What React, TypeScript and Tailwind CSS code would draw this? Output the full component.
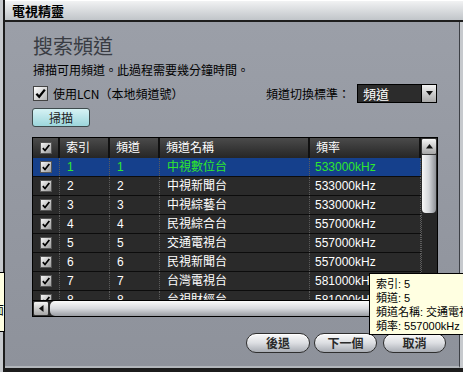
import React from "react";

const channels = [
  { idx: "1", ch: "1", name: "中視數位台", freq: "533000kHz" },
  { idx: "2", ch: "2", name: "中視新聞台", freq: "533000kHz" },
  { idx: "3", ch: "3", name: "中視綜藝台", freq: "533000kHz" },
  { idx: "4", ch: "4", name: "民視綜合台", freq: "557000kHz" },
  { idx: "5", ch: "5", name: "交通電視台", freq: "557000kHz" },
  { idx: "6", ch: "6", name: "民視新聞台", freq: "557000kHz" },
  { idx: "7", ch: "7", name: "台灣電視台", freq: "581000kHz" },
  { idx: "8", ch: "8", name: "台視財經台", freq: "581000kHz" }
];

function CheckMark({ size }: { size: number }) {
  return (
    <svg width={size} height={size} viewBox="0 0 12 12">
      <polyline points="2.2,6.2 4.8,9 10,2.4" fill="none" stroke="#000" strokeWidth="2.1" />
    </svg>
  );
}

function CellCheck() {
  return (
    <span className="flex h-[12px] w-[12px] items-center justify-center border border-[#555] bg-gradient-to-br from-[#f6f6f6] to-[#9c9c9c]">
      <CheckMark size={10} />
    </span>
  );
}

function HeaderCell({ width, children }: { width: string; children?: React.ReactNode }) {
  return (
    <div
      className={`flex h-full items-center border-r-2 border-[#111] bg-gradient-to-b from-[#4b4b4b] to-[#262626] pl-[6px] text-white ${width}`}
    >
      {children}
    </div>
  );
}

function PillButton({ label, width }: { label: string; width: string }) {
  return (
    <button
      className={`flex h-[20px] items-center justify-center rounded-full border border-[#2e2e2e] bg-gradient-to-b from-[#fafafa] via-[#dcdee2] to-[#a9adb4] text-[12px] font-bold text-[#2a2a2a] shadow-[inset_0_1px_0_#fff] ${width}`}
    >
      {label}
    </button>
  );
}

export default function App() {
  return (
    <div className="relative h-[372px] w-[463px] overflow-hidden bg-[#c6c9cd] font-['Noto_Sans_CJK_TC',sans-serif] text-[12px] text-black">
      <div className="ml-[3px] flex h-full flex-col border-b-4 border-l-2 border-[#1c1c1c]">
        <div className="flex h-[22px] shrink-0 items-center border-b-2 border-t border-b-[#1e1e1e] border-t-white bg-gradient-to-b from-[#f1f2f3] to-[#c1c5c9] pl-[7px] text-[13px] font-bold leading-none">
          電視精靈
        </div>

        <div className="mr-[3px] flex flex-1 flex-col border-b-2 border-r border-b-[#b2b6bb] border-r-[#3d4046] bg-gradient-to-b from-[#9b9fa8] to-[#8e929b] pl-[27px] pt-[12px]">
          <h1 className="pl-px text-[20px] font-normal leading-[24px] text-[#393c43]">搜索頻道</h1>
          <p className="mt-[4px] pl-px leading-[16px]">掃描可用頻道。此過程需要幾分鐘時間。</p>

          <div className="mt-[6px] flex h-[19px] w-[405px] items-center justify-between">
            <label className="flex items-center gap-[5px] pl-px leading-none">
              <span className="flex h-[15px] w-[15px] items-center justify-center border border-[#444] bg-gradient-to-br from-[#ffffff] to-[#b4b4b4]">
                <CheckMark size={13} />
              </span>
              使用LCN（本地頻道號）
            </label>
            <div className="flex items-center">
              <span className="leading-none">頻道切換標準：</span>
              <div className="ml-[7px] flex h-[19px] w-[80px] border border-black bg-[#2c2c2c]">
                <span className="flex flex-1 items-center pl-[5px] text-[13px] leading-none text-white">頻道</span>
                <span className="flex w-[15px] items-center justify-center border-l border-black bg-gradient-to-b from-[#f2f2f2] to-[#a9a9a9]">
                  <svg width="7" height="5" viewBox="0 0 7 5">
                    <polygon points="0,0 7,0 3.5,4.5" fill="#111" />
                  </svg>
                </span>
              </div>
            </div>
          </div>

          <button className="mt-[5px] flex h-[19px] w-[58px] items-center justify-center rounded-[3px] border border-[#3e4a4c] bg-gradient-to-b from-[#d6f2f4] to-[#9cd6dc] text-[12px] leading-none text-[#1c1c1c]">
            掃描
          </button>

          <div className="mt-[10px] w-[406px] border border-black bg-[#2a2a2a] font-['Liberation_Sans','Noto_Sans_CJK_TC',sans-serif]">
            <div className="flex h-[162px]">
              <div className="flex w-[388px] flex-col">
                <div className="flex h-[20px] shrink-0">
                  <div className="flex h-full w-[27px] items-center justify-center border-r-2 border-[#111] bg-gradient-to-b from-[#4b4b4b] to-[#262626]">
                    <CellCheck />
                  </div>
                  <HeaderCell width="w-[50px]">索引</HeaderCell>
                  <HeaderCell width="w-[50px]">頻道</HeaderCell>
                  <HeaderCell width="w-[150px]">頻道名稱</HeaderCell>
                  <HeaderCell width="w-[111px]">頻率</HeaderCell>
                </div>
                <div className="h-[142px] overflow-hidden">
                  {channels.map((row, i) => (
                    <div
                      key={row.idx}
                      className={`flex h-[19px] border-b border-[#0c0c0c] leading-none ${
                        i === 0 ? "bg-[#15408c] text-[#2ee82e]" : "text-white"
                      }`}
                    >
                      <div className="flex w-[27px] items-center justify-center border-r border-dotted border-[#5c5c5c]">
                        <CellCheck />
                      </div>
                      <div className="flex w-[50px] items-center border-r border-dotted border-[#5c5c5c] pl-[7px]">{row.idx}</div>
                      <div className="flex w-[50px] items-center border-r border-dotted border-[#5c5c5c] pl-[7px]">{row.ch}</div>
                      <div className="flex w-[150px] items-center border-r border-dotted border-[#5c5c5c] pl-[7px]">{row.name}</div>
                      <div className="flex w-[111px] items-center border-r border-dotted border-[#5c5c5c] pl-[5px]">{row.freq}</div>
                    </div>
                  ))}
                </div>
              </div>

              <div className="flex w-[16px] flex-col">
                <div className="flex h-[17px] items-center justify-center rounded-[2px] border border-[#333] bg-gradient-to-b from-[#f4f4f4] to-[#a6a6a6]">
                  <svg width="7" height="5" viewBox="0 0 7 5">
                    <polygon points="3.5,0 7,4.5 0,4.5" fill="#111" />
                  </svg>
                </div>
                <div className="mx-px h-[58px] rounded-b-[4px] bg-gradient-to-r from-[#f8f8f8] via-[#d4d6da] to-[#8e9196]" />
                <div className="flex-1 border-l border-dotted border-[#5c5c5c] bg-[#262626]" />
              </div>
            </div>

            <div className="flex h-[16px] border-t border-black">
              <div className="flex w-[16px] items-center justify-center rounded-[2px] border border-[#333] bg-gradient-to-b from-[#f4f4f4] to-[#a6a6a6]">
                <svg width="5" height="7" viewBox="0 0 5 7">
                  <polygon points="0,3.5 4.5,0 4.5,7" fill="#111" />
                </svg>
              </div>
              <div className="ml-px flex-1 rounded-l-[5px] bg-gradient-to-b from-[#fbfbfb] via-[#d8dade] to-[#9a9da3]" />
            </div>
          </div>

          <div className="mt-[16px] flex justify-end pr-[13px]">
            <PillButton label="後退" width="w-[64px]" />
            <div className="ml-[4px]">
              <PillButton label="下一個" width="w-[63px]" />
            </div>
            <div className="ml-[6px]">
              <PillButton label="取消" width="w-[63px]" />
            </div>
          </div>
        </div>
      </div>

      <div className="absolute left-[369px] top-[273px] h-[62px] w-[110px] border border-black bg-[#ffffe1] pl-[6px] pt-[3px] font-['Liberation_Sans','Noto_Sans_CJK_TC',sans-serif] text-[11px] leading-[14px] text-black">
        <div className="whitespace-nowrap">索引: 5</div>
        <div className="whitespace-nowrap">頻道: 5</div>
        <div className="whitespace-nowrap">頻道名稱: 交通電視台</div>
        <div className="whitespace-nowrap">頻率: 557000kHz</div>
      </div>

      <div className="absolute left-0 top-[272px] flex h-[60px] w-[5px] justify-end overflow-hidden border-y border-r border-black bg-[#ffffe1] pt-[30px] text-[12px] leading-[14px]">
        <span className="shrink-0">面</span>
      </div>
    </div>
  );
}
